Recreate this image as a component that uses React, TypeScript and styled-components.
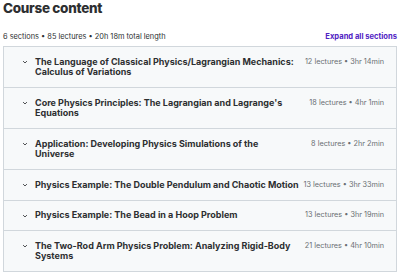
import styled, { createGlobalStyle } from "styled-components";

const GlobalStyle = createGlobalStyle`
  body {
    margin: 0;
    background: #ffffff;
    font-family: Inter, "Noto Sans", sans-serif;
    color: #2d2f31;
  }
`;

const Page = styled.div`
  width: 400px;
  padding: 0 3px 0 3px;
  box-sizing: border-box;
`;

const Title = styled.h2`
  margin: 0;
  font-size: 13.5px;
  line-height: 16px;
  font-weight: 800;
  letter-spacing: -0.3px;
`;

const Summary = styled.div`
  display: flex;
  align-items: center;
  justify-content: space-between;
  margin-top: 14px;
  height: 12px;
  font-size: 7.4px;
  color: #2d2f31;
`;

const ExpandLink = styled.button`
  border: none;
  background: none;
  padding: 0;
  margin-right: 0;
  font-family: inherit;
  font-size: 7.6px;
  font-weight: 700;
  color: #5022c3;
  cursor: pointer;
`;

const SectionList = styled.div`
  margin-top: 4px;
  border: 1px solid #d1d7dc;
  border-top: none;
`;

const SectionRow = styled.div`
  display: flex;
  align-items: flex-start;
  padding: 9.5px 12px 9.5px 17px;
  background: #f7f9fa;
  border-top: 1px solid #d1d7dc;
`;

const Chevron = styled.svg`
  flex-shrink: 0;
  width: 8px;
  height: 8px;
  margin-top: 1.5px;
  margin-right: 6px;
  color: #2d2f31;
`;

const SectionName = styled.div`
  flex: 1;
  max-width: 264px;
  font-size: 9px;
  line-height: 10.5px;
  font-weight: 700;
`;

const SectionMeta = styled.div`
  flex-shrink: 0;
  margin-left: auto;
  font-size: 7.3px;
  line-height: 10.5px;
  color: #6a6f73;
  text-align: right;
`;

interface Section {
  name: string;
  lectures: number;
  length: string;
}

const sections: Section[] = [
  {
    name: "The Language of Classical Physics/Lagrangian Mechanics: Calculus of Variations",
    lectures: 12,
    length: "3hr 14min",
  },
  {
    name: "Core Physics Principles: The Lagrangian and Lagrange's Equations",
    lectures: 18,
    length: "4hr 1min",
  },
  {
    name: "Application: Developing Physics Simulations of the Universe",
    lectures: 8,
    length: "2hr 2min",
  },
  {
    name: "Physics Example: The Double Pendulum and Chaotic Motion",
    lectures: 13,
    length: "3hr 33min",
  },
  {
    name: "Physics Example: The Bead in a Hoop Problem",
    lectures: 13,
    length: "3hr 19min",
  },
  {
    name: "The Two-Rod Arm Physics Problem: Analyzing Rigid-Body Systems",
    lectures: 21,
    length: "4hr 10min",
  },
];

const App = () => {
  return (
    <Page>
      <GlobalStyle />
      <Title>Course content</Title>
      <Summary>
        <span>6 sections • 85 lectures • 20h 18m total length</span>
        <ExpandLink>Expand all sections</ExpandLink>
      </Summary>
      <SectionList>
        {sections.map((s) => (
          <SectionRow key={s.name}>
            <Chevron viewBox="0 0 24 24" fill="none" stroke="currentColor" strokeWidth="2.5" strokeLinecap="round" strokeLinejoin="round">
              <path d="M7 10l5 5 5-5" />
            </Chevron>
            <SectionName>{s.name}</SectionName>
            <SectionMeta>
              {s.lectures} lectures • {s.length}
            </SectionMeta>
          </SectionRow>
        ))}
      </SectionList>
    </Page>
  );
};

export default App;
